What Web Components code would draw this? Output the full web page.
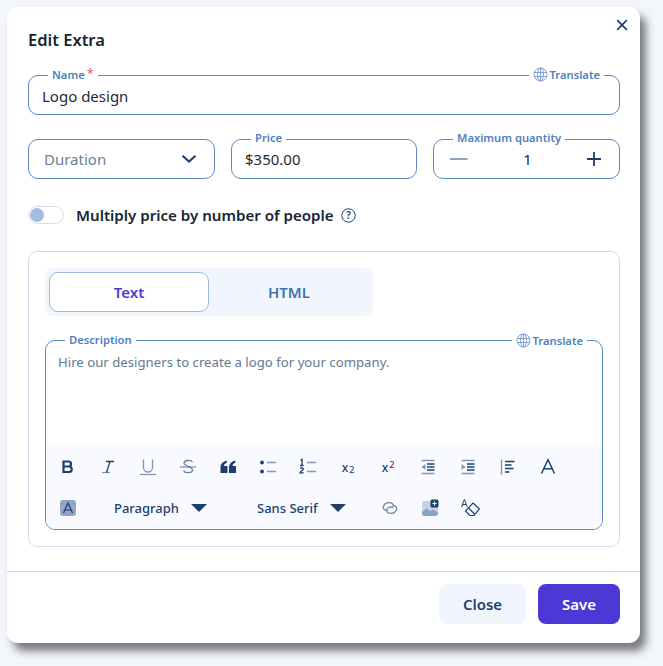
<!DOCTYPE html>
<html lang="en"><head><meta charset="utf-8"><title>Edit Extra</title>
<style>
html,body{margin:0;padding:0;height:666px;overflow:hidden;background:#f3f6fb;font-family:"Noto Sans","Open Sans",sans-serif}
</style></head><body>
<edit-dialog></edit-dialog>
<script>
const C='#1d3f6e', B='#5a8ac6', L='#4f7fbd';
const def=(n,html,init)=>customElements.define(n,class extends HTMLElement{constructor(){super();this.attachShadow({mode:'open'}).innerHTML=html;}connectedCallback(){init&&init(this)}});

const GLOBE=`<svg width="15" height="15" viewBox="0 0 15 15" fill="none" stroke="#7fa3d3" stroke-width="1"><circle cx="7.5" cy="7.5" r="6.5"/><ellipse cx="7.5" cy="7.5" rx="3" ry="6.5"/><path d="M1 5.5h13M1 9.500h13M7.500 1v13"/></svg>`;

def('translate-tag',`<style>:host{display:inline-flex;align-items:center;gap:2px;font-size:11.2px;font-weight:600;color:${L};background:#fff;padding:0 4px;line-height:14px;white-space:nowrap}</style>${GLOBE}<slot></slot>`);

def('field-box',`<style>
:host{display:block;position:relative;box-sizing:border-box;height:40px;border:1px solid ${B};border-radius:10px;background:#fff}
.legend{position:absolute;top:-8px;left:19px;background:#fff;padding:0 4px;font-size:11.2px;font-weight:600;color:${L};line-height:14px;white-space:nowrap;display:flex}
.right{position:absolute;top:-9px;right:15px;line-height:14px;display:flex}
.body{display:flex;align-items:center;height:100%;box-sizing:border-box;padding:0 13px;font-size:15px;color:#1f2937}
.legend:empty{display:none}
</style><div class="legend" part="legend"></div><div class="right"><slot name="right"></slot></div><div class="body"><slot></slot></div>`,
el=>{const s=el.shadowRoot,l=el.getAttribute('label');const g=s.querySelector('.legend');
 if(l){g.textContent=l;if(el.hasAttribute('required')){const r=document.createElement('span');r.textContent='*';r.style.cssText='color:#f0626c;margin-left:2px;margin-top:-1px;font-size:12.5px;font-weight:500'; g.append(r)}else{g.style.top='-9px'}}
 if(el.hasAttribute('required')){s.querySelector('.body').style.paddingTop='2px'}
});

def('toggle-switch',`<style>:host{display:block;box-sizing:border-box;width:36px;height:18px;border:1px solid #d3e0f0;border-radius:9px;background:#fff;position:relative}
i{position:absolute;left:1px;top:1px;width:14px;height:14px;border-radius:50%;background:#a3bde2}</style><i></i>`);

def('segment-tabs',`<style>:host{display:flex;box-sizing:border-box;width:328px;height:48px;padding:4px;border-radius:8px;background:#f1f6fe}
div{flex:0 0 160px;display:flex;align-items:center;justify-content:center;font-size:15px;font-weight:600;border-radius:9px;box-sizing:border-box}
.on{background:#fff;border:1px solid #9db8e0;color:#4f39d6}.off{flex:1;color:#4272b2}</style><div class="on">Text</div><div class="off">HTML</div>`);

def('tool-btn',`<style>:host{display:flex;align-items:center;justify-content:center;width:24px;height:24px;color:${C}}svg{display:block}</style><slot></slot>`);

def('drop-btn',`<style>:host{display:inline-flex;align-items:center;gap:12px;font-size:13px;font-weight:500;color:${C};white-space:nowrap}
i{display:block;width:0;height:0;border:8px solid transparent;border-top:8px solid ${C};border-bottom:0}</style><slot></slot><i></i>`);

const S=(b,extra='')=>`<svg width="20" height="20" viewBox="0 0 20 20" fill="none" stroke="${C}" ${extra}>${b}</svg>`;
const F='#7f97b9';
def('edit-dialog',`<style>
:host{display:block;position:relative;box-sizing:border-box;width:633px;height:636px;margin:7px 0 0 7px;background:#fff;border-radius:11px;box-shadow:6px 8px 9px rgba(20,20,20,.55);font-family:"Noto Sans","Open Sans",sans-serif}
.close{position:absolute;right:11px;top:11px;width:14px;height:14px}
main{padding:21px 20px 0 21px;display:flex;flex-direction:column}
h1{margin:0;font-size:16.5px;font-weight:600;color:#172536;line-height:24px}
.name{margin-top:23px}
.row{display:grid;grid-template-columns:187px 186px 187px;gap:16px;margin-top:24px}
.dur{display:flex;justify-content:space-between;align-items:center;color:#6b7f98;width:100%;padding:0 4px 0 2px}
.qty{display:flex;width:100%;align-items:center;justify-content:space-between;padding:0 5px 0 3px;box-sizing:border-box}
.mult{display:flex;align-items:center;margin-top:27px;height:18px;font-size:15.1px;font-weight:600;color:#172536}
.mult b{font-weight:600;margin-left:12px;margin-right:7px}
.card{margin-top:27px;box-sizing:border-box;height:296px;border:1px solid #cfdcec;border-radius:9px;padding:16px}
.desc{margin-top:24px;position:relative;box-sizing:border-box;height:190px;border:1px solid ${B};border-radius:10px;overflow:visible;display:flex;flex-direction:column}
.lg{position:absolute;left:19px;top:-8px;background:#fff;padding:0 4px;font-size:11.2px;font-weight:600;color:${L};line-height:14px}
.tr{position:absolute;right:15px;top:-8px;display:flex}
.text{flex:1;padding:12px 12px;font-size:13.2px;line-height:18px;color:#66788f}
.tb{height:84px;background:#f8faff;border-radius:0 0 9px 9px;display:grid;grid-template-rows:44px 38px;padding-left:10px;box-sizing:border-box}
.tr1,.tr2{display:flex;align-items:center}
.tr1 tool-btn{margin-right:16px}
.tr2{position:relative;}
footer{position:absolute;left:0;right:0;bottom:0;height:72px;box-sizing:border-box;border-top:1px solid #cbd9ea;display:flex;justify-content:flex-end;align-items:flex-start;gap:12px;padding:12px 20px 0 0}
button{font:600 15px "Noto Sans","Open Sans",sans-serif;height:40px;border:0;border-radius:8px;padding:0;cursor:pointer}
.c{width:87px;background:#f1f6fe;color:${C}}.s{width:82px;background:#4c38d4;color:#fff}
</style>
<svg class="close" viewBox="0 0 14 14" fill="none" stroke="${C}" stroke-width="1.7"><path d="M2.200 2.200l9.600 9.600M11.800 2.200l-9.600 9.600"/></svg>
<main>
<h1>Edit Extra</h1>
<field-box class="name" label="Name" required>Logo design<translate-tag slot="right">Translate</translate-tag></field-box>
<div class="row">
<field-box><div class="dur">Duration<svg width="16" height="10" viewBox="0 0 16 10" fill="none" stroke="${C}" stroke-width="2.100"><path d="M1.500 1.800l6.500 5.700 6.500-5.700"/></svg></div></field-box>
<field-box label="Price">$350.00</field-box>
<field-box label="Maximum quantity"><div class="qty"><svg width="18" height="4" viewBox="0 0 18 4"><path d="M0 2h17.500" stroke="#8fa3bf" stroke-width="2"/></svg><span>1</span><svg width="14" height="14" viewBox="0 0 14 14"><path d="M7 0v14M0 7h14" stroke="${C}" stroke-width="1.800"/></svg></div></field-box>
</div>
<div class="mult"><toggle-switch></toggle-switch><b>Multiply price by number of people</b><svg width="15" height="15" viewBox="0 0 15 15" fill="none" stroke="${C}"><circle cx="7.500" cy="7.500" r="6.700"/><text x="7.500" y="11" text-anchor="middle" font-size="10" font-weight="600" fill="${C}" stroke="none" font-family="Noto Sans">?</text></svg></div>
<section class="card">
<segment-tabs></segment-tabs>
<div class="desc"><span class="lg">Description</span><span class="tr"><translate-tag>Translate</translate-tag></span>
<div class="text">Hire our designers to create a logo for your company.</div>
<div class="tb">
<div class="tr1">
<tool-btn>${S(`<path d="M5.500 4.500h5a2.500 2.500 0 010 5H5.500zM5.500 9.500h5.500a2.700 2.700 0 010 5.500H5.500z" stroke-width="2.200"/>`)}</tool-btn>
<tool-btn>${S(`<path d="M4 15.500h8" stroke="${F}" stroke-width="1.300"/><path d="M8 4.500h8M12 4.500l-3.500 11" stroke-width="1.300"/>`)}</tool-btn>
<tool-btn>${S(`<path d="M5.500 2.500v8a4.500 4.500 0 009 0v-8" stroke="${F}" stroke-width="1.300"/><path d="M2 17.500h16" stroke="${F}" stroke-width="1.300"/>`)}</tool-btn>
<tool-btn>${S(`<path d="M2 10h16" stroke="${F}" stroke-width="1.300"/><path d="M14.500 5C13 2.800 6.500 2.800 6 6.200c-.4 2.800 8.500 3.300 8.500 6.800 0 3.400-7 3.500-9 .8" stroke="${C}" stroke-opacity=".65" stroke-width="1.300"/>`)}</tool-btn>
<tool-btn>${S(`<path d="M2.500 16v-5.500C2.500 6.800 5 4.400 8.800 3.500v2.300C7.200 6.400 6.200 7.300 6 9h3.500v7zM11 16v-5.500c0-3.700 2.500-6.100 6.300-7v2.300c-1.600.6-2.600 1.500-2.800 3.200H18v7z" fill="${C}" stroke="none"/>`)}</tool-btn>
<tool-btn>${S(`<circle cx="4" cy="5.500" r="1.900" fill="${C}" stroke="none"/><circle cx="4" cy="14.500" r="1.900" fill="${C}" stroke="none"/><path d="M9 5.500h9M9 14.500h9" stroke="${F}" stroke-width="1.300"/>`)}</tool-btn>
<tool-btn>${S(`<path d="M2.500 3.200l1.500-.9v6M2 8.500h3.600M2 11.500c.5-1 3.500-1 3.300.6-.1 1-3.300 2-3.300 3.700h3.600" stroke-width="1.300"/><path d="M9 5.500h9M9 14.500h9" stroke="${F}" stroke-width="1.300"/>`)}</tool-btn>
<tool-btn style="font:500 12px 'Noto Sans';position:relative">x<span style="font-size:9px;margin-top:5px;margin-left:1px">2</span></tool-btn>
<tool-btn style="font:500 12px 'Noto Sans'">x<span style="font-size:9px;margin-top:-5px;margin-left:1px">2</span></tool-btn>
<tool-btn>${S(`<path d="M3.500 3.500h13M3.500 16.500h13" stroke="${F}" stroke-width="1.500"/><path d="M9 7h7.500M9 10h7.500M9 13h7.500" stroke-width="1.300"/><path d="M7.500 7v6l-4-3z" fill="${F}" stroke="none"/>`)}</tool-btn>
<tool-btn>${S(`<path d="M3.500 3.500h13M3.500 16.500h13" stroke="${F}" stroke-width="1.500"/><path d="M9 7h7.500M9 10h7.500M9 13h7.500" stroke-width="1.300"/><path d="M3.500 7v6l4-3z" fill="${F}" stroke="none"/>`)}</tool-btn>
<tool-btn>${S(`<path d="M3.500 2.500v15" stroke="${F}" stroke-width="1.400"/><path d="M7 4.500h9.500M7 8h6.500M7 11.500h8.500M7 15h4.500" stroke-width="1.300"/>`)}</tool-btn>
<tool-btn>${S(`<path d="M3.500 16.500L10 2.800l6.500 13.700M5.800 11.800h8.400" stroke-width="1.500"/>`)}</tool-btn>
</div>
<div class="tr2">
<tool-btn><svg width="16" height="16" viewBox="0 0 16 16"><rect width="16" height="16" rx="3" fill="#8fa5c8"/><path d="M3.500 13L8 3l4.500 10M5 10h6" fill="none" stroke="${C}" stroke-width="1.200"/></svg></tool-btn>
<drop-btn style="margin-left:34px">Paragraph</drop-btn>
<drop-btn style="margin-left:50px">Sans Serif</drop-btn>
<tool-btn style="margin-left:32px">${S(`<path d="M7.500 12.500C4.800 12.600 3 11 3.300 8.800 3.700 6.200 6.600 4.400 9.500 4.600c2.300.2 3.800 1.500 3.700 3.200" stroke="#6f8bb0" stroke-width="1.300"/><path d="M12.500 7.500c2.700-.1 4.500 1.500 4.200 3.700-.4 2.600-3.300 4.400-6.200 4.200-2.300-.2-3.800-1.500-3.700-3.200.1-2 2.400-3.300 4.500-3.200 1 .1 1.700.5 2 1" stroke="#6f8bb0" stroke-width="1.300"/>`)}</tool-btn>
<tool-btn style="margin-left:16px">${S(`<rect x="2" y="3" width="16" height="15" rx="3" fill="#c5d2e6" stroke="none"/><path d="M2 14l4.500-3.500 3.500 2.500 3-1.500 5 3v.5a3 3 0 01-3 3H5a3 3 0 01-3-3z" fill="#8ba2c4" stroke="none"/><rect x="10.500" y="1.500" width="8" height="8" rx="1.500" fill="${C}" stroke="none"/><path d="M14.500 3.500v4M12.500 5.500h4" stroke="#fff" stroke-width="1.100"/>`)}</tool-btn>
<tool-btn style="margin-left:16px">${S(`<path d="M13 5l6.500 6-5.500 6.500h-4l-4.500-4.500zM8 9.500l6.500 6.500" stroke-width="1.200"/><path d="M1.500 9l2.900-7.500L7.300 9M2.700 6.500h3.500" stroke-width="1"/>`)}</tool-btn>
</div>
</div>
</div>
</section>
</main>
<footer><button class="c">Close</button><button class="s">Save</button></footer>`);
</script></body></html>
